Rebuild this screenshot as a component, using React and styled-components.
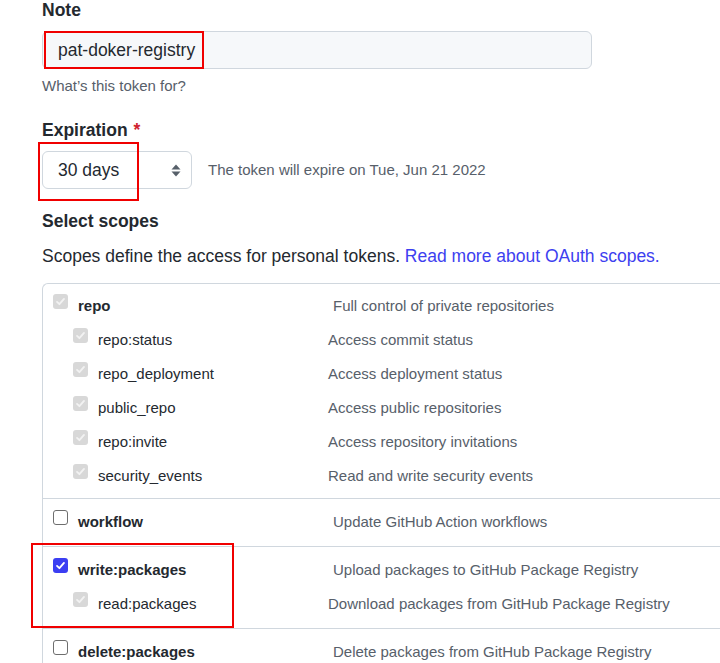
import React from "react";
import styled, { createGlobalStyle } from "styled-components";

const GlobalStyle = createGlobalStyle`
  html, body {
    margin: 0;
    padding: 0;
    overflow: hidden;
    background: #ffffff;
  }
  body {
    font-family: "Liberation Sans", Arial, sans-serif;
    color: #24292f;
  }
`

const Page = styled.div`
  padding: 0 0 0 42px;
  width: 720px;
  box-sizing: border-box;
`
const Label = styled.div`
  font-size: 17.5px;
  font-weight: 700;
  line-height: 20px;
  margin-top: ${props => props.gap || 0}px;
  span {
    color: #cf222e;
    margin-left: 6px;
  }
`
const Field = styled.div`
  position: relative;
  width: ${props => props.width}px;
  height: 38px;
  box-sizing: border-box;
  margin-top: 11px;
  border: 1px solid #d0d7de;
  border-radius: 6px;
  background: ${props => props.muted ? "#f6f8fa" : "#ffffff"};
  font-size: 17.5px;
  line-height: 36px;
  padding-left: 15px;
  display: flex;
  align-items: center;
  justify-content: space-between;
`
const Hint = styled.div`
  font-size: 15px;
  line-height: 20px;
  color: #57606a;
  margin-top: 7px;
`
const Note = styled.span`
  font-size: 15px;
  line-height: 20px;
  color: #57606a;
`
const Mark = styled.div`
  position: absolute;
  left: ${props => props.l}px;
  top: ${props => props.t}px;
  width: ${props => props.w}px;
  height: ${props => props.h}px;
  border: 2px solid #f00000;
  box-sizing: border-box;
  pointer-events: none;
`
const Inline = styled.div`
  display: flex;
  align-items: center;
  gap: 16px;
  margin-top: 11px;
  ${Field} {
    margin-top: 0;
  }
`
const Arrows = styled.svg`
  margin-right: 10px;
`
const Lead = styled.p`
  margin: 13px 0 0;
  font-size: 17.5px;
  line-height: 24px;
  a {
    color: #3d40f0;
    text-decoration: none;
  }
`
const Table = styled.div`
  margin-top: 15px;
  border: 1px solid #d0d7de;
  border-right: none;
  border-bottom: none;
  border-top-left-radius: 6px;
`
const Group = styled.div`
  position: relative;
  padding: 12px 0 14px 10px;
  display: flex;
  flex-direction: column;
  gap: 14px;
  &:first-child {
    padding-bottom: 12px;
  }
  & + & {
    border-top: 1px solid #d0d7de;
    padding-top: 13px;
  }
`
const Row = styled.div`
  display: flex;
  align-items: flex-start;
  height: 20px;
  padding-left: ${props => props.child ? 20 : 0}px;
`
const Name = styled.div`
  display: flex;
  align-items: flex-start;
  gap: 10px;
  width: ${props => props.child ? 255 : 280}px;
  font-size: 15px;
  line-height: 20px;
  font-weight: ${props => props.child ? 400 : 700};
`
const Desc = styled.div`
  font-size: 15px;
  line-height: 20px;
  color: #57606a;
  white-space: nowrap;
`
const Box = styled.span`
  flex: none;
  width: 15px;
  height: 15px;
  margin-top: -2px;
  box-sizing: border-box;
  border-radius: 3px;
  display: flex;
  align-items: center;
  justify-content: center;
  background: ${props =>
    props.state === "on" ? "#3b3ef2" : props.state === "off" ? "#ffffff" : "#d8d8d8"};
  border: ${props => props.state === "off" ? "1.5px solid #6e6e6e" : "none"};
`

const Check = ({ state }) => (
  <Box state={state}>
    {state !== "off" && (
      <svg width="11" height="11" viewBox="0 0 12 12">
        <path
          d="M2.2 6.4 L4.8 8.9 L9.8 3.2"
          fill="none"
          stroke={state === "on" ? "#ffffff" : "#f2f2f2"}
          strokeWidth="2"
          strokeLinecap="round"
          strokeLinejoin="round"
        />
      </svg>
    )}
  </Box>
)

const Scope = ({ name, desc, state, child }) => (
  <Row child={child}>
    <Name child={child}>
      <Check state={state} />
      {name}
    </Name>
    <Desc>{desc}</Desc>
  </Row>
)

const groups = [
  {
    main: { name: "repo", desc: "Full control of private repositories", state: "dis" },
    subs: [
      ["repo:status", "Access commit status"],
      ["repo_deployment", "Access deployment status"],
      ["public_repo", "Access public repositories"],
      ["repo:invite", "Access repository invitations"],
      ["security_events", "Read and write security events"],
    ],
  },
  {
    main: { name: "workflow", desc: "Update GitHub Action workflows", state: "off" },
    subs: [],
  },
  {
    main: { name: "write:packages", desc: "Upload packages to GitHub Package Registry", state: "on" },
    subs: [["read:packages", "Download packages from GitHub Package Registry"]],
    marked: true,
  },
  {
    main: { name: "delete:packages", desc: "Delete packages from GitHub Package Registry", state: "off" },
    subs: [],
  },
]

export default function App() {
  return (
    <Page>
      <GlobalStyle />
      <Label>Note</Label>
      <Field width={550} muted>
        pat-doker-registry
        <Mark l={1} t={-1} w={160} h={38} />
      </Field>
      <Hint>What’s this token for?</Hint>

      <Label gap={24}>Expiration<span>*</span></Label>
      <Inline>
        <Field width={150}>
          30 days
          <Arrows width="10" height="13" viewBox="0 0 10 13">
            <path d="M5 0.5 L9.5 5.5 H0.5 Z" fill="#57606a" />
            <path d="M5 12.5 L9.5 7.5 H0.5 Z" fill="#57606a" />
          </Arrows>
          <Mark l={-5} t={-10} w={101} h={59} />
        </Field>
        <Note>The token will expire on Tue, Jun 21 2022</Note>
      </Inline>

      <Label gap={22}>Select scopes</Label>
      <Lead>
        Scopes define the access for personal tokens. <a href="#">Read more about OAuth scopes.</a>
      </Lead>

      <Table>
        {groups.map(g => (
          <Group key={g.main.name}>
            <Scope {...g.main} />
            {g.subs.map(([name, desc]) => (
              <Scope key={name} name={name} desc={desc} state="dis" child />
            ))}
            {g.marked && <Mark l={-12} t={-4} w={203} h={85} />}
          </Group>
        ))}
      </Table>
    </Page>
  )
}
